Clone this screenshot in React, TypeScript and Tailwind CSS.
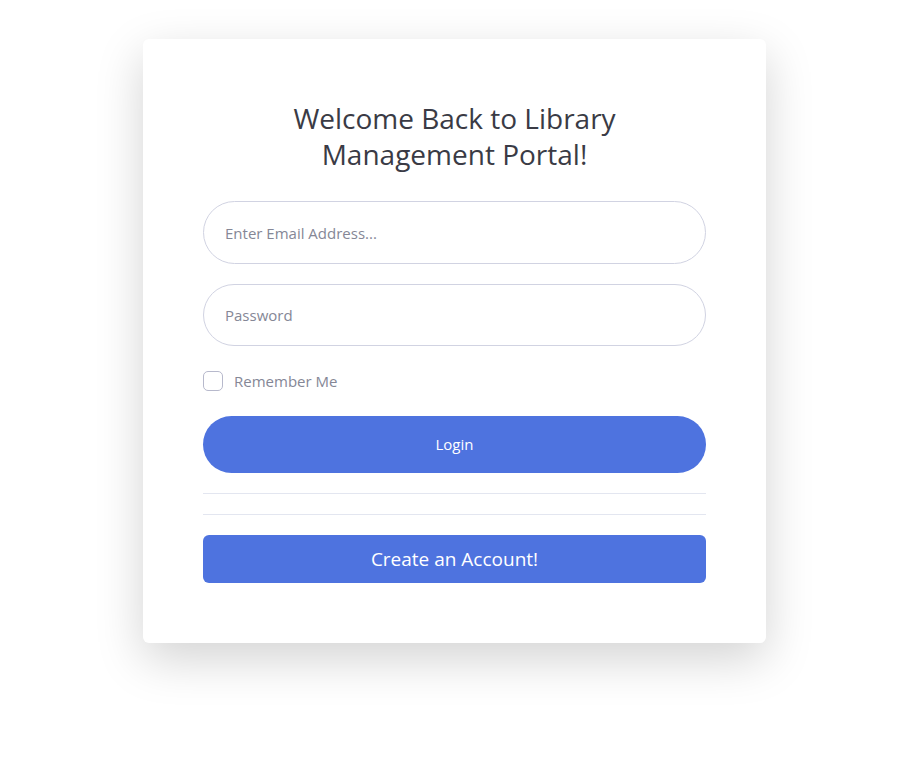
export default function App() {
  return (
    <div className="min-h-[777px] bg-white pt-[39px]" style={{ fontFamily: '"Open Sans", "Noto Sans", sans-serif' }}>
      <div className="ml-[143px] w-[623px] rounded-[6px] bg-white px-[60px] pt-[61px] pb-[60px] shadow-[0_1rem_3rem_rgba(0,0,0,0.175)]">
        <h1 className="mb-[29px] text-center text-[28px] leading-[36px] font-normal text-[#3a3b45]">
          Welcome Back to Library
          <br />
          Management Portal!
        </h1>
        <div className="flex flex-col gap-[20px]">
          <input
            className="h-[63px] w-full rounded-full border border-[#d1d3e2] px-[21px] text-[15px] text-[#6e707e] placeholder:text-[#858796] outline-none"
            placeholder="Enter Email Address..."
          />
          <input
            type="password"
            className="h-[62px] w-full rounded-full border border-[#d1d3e2] px-[21px] text-[15px] text-[#6e707e] placeholder:text-[#858796] outline-none"
            placeholder="Password"
          />
        </div>
        <label className="mt-[24px] flex items-center gap-[11px]">
          <span className="h-[20px] w-[20px] rounded-[5px] border border-[#b7b9cc] bg-white" />
          <span className="text-[15px] text-[#858796]">Remember Me</span>
        </label>
        <button className="mt-[23px] flex h-[57px] w-full items-center justify-center rounded-full bg-[#4e73df] text-[15px] text-white">
          Login
        </button>
        <hr className="mt-[20px] border-t border-[#e3e6f0]" />
        <hr className="mt-[20px] border-t border-[#e3e6f0]" />
        <button className="mt-[20px] flex h-[48px] w-full items-center justify-center rounded-[6px] bg-[#4e73df] pt-[2px] text-[19px] text-white">
          Create an Account!
        </button>
      </div>
    </div>
  );
}
